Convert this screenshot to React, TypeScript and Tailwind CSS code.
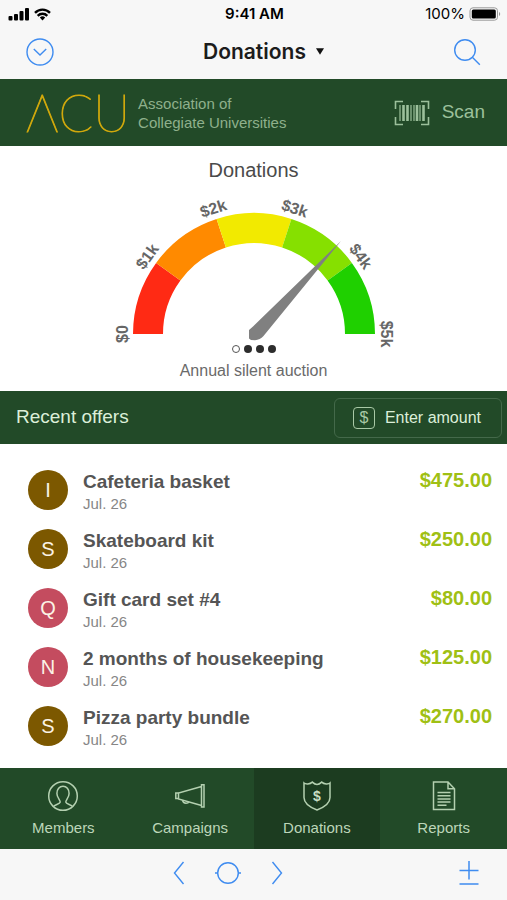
import React from 'react';

interface Offer {
  initial: string;
  title: string;
  date: string;
  amount: string;
  color: string;
}

const offers: Offer[] = [
  { initial: 'I', title: 'Cafeteria basket', date: 'Jul. 26', amount: '$475.00', color: 'bg-[#7c5800]' },
  { initial: 'S', title: 'Skateboard kit', date: 'Jul. 26', amount: '$250.00', color: 'bg-[#7c5800]' },
  { initial: 'Q', title: 'Gift card set #4', date: 'Jul. 26', amount: '$80.00', color: 'bg-[#c44c5f]' },
  { initial: 'N', title: '2 months of housekeeping', date: 'Jul. 26', amount: '$125.00', color: 'bg-[#c44c5f]' },
  { initial: 'S', title: 'Pizza party bundle', date: 'Jul. 26', amount: '$270.00', color: 'bg-[#7c5800]' },
];

const segments = ['#ff2a14', '#ff8a00', '#f2ea00', '#86e000', '#1fd000'];
const ticks = ['$0', '$1k', '$2k', '$3k', '$4k', '$5k'];

const CENTER_X = 150;
const CENTER_Y = 140;

// Point on a circle around the gauge's centre, 0deg is the left end
const polar = (radius: number, deg: number) => {
  const rad = ((180 - deg) * Math.PI) / 180;
  return {
    x: CENTER_X + radius * Math.cos(rad),
    y: CENTER_Y - radius * Math.sin(rad),
  };
};

const segmentPath = (from: number, to: number) => {
  const a = polar(121, from);
  const b = polar(121, to);
  const c = polar(91, to);
  const d = polar(91, from);
  return `M${a.x} ${a.y}A121 121 0 0 1 ${b.x} ${b.y}L${c.x} ${c.y}A91 91 0 0 0 ${d.x} ${d.y}Z`;
};

const Gauge: React.FC = () => (
  <svg
    viewBox="0 0 300 150"
    className="w-[300px] h-[150px] overflow-visible"
    role="img"
    aria-label="Donations gauge"
  >
    {segments.map((fill, i) => (
      <path key={fill} d={segmentPath(i * 36, (i + 1) * 36)} fill={fill} />
    ))}
    {ticks.map((label, i) => {
      const p = polar(132, i * 36);
      return (
        <text
          key={label}
          transform={`translate(${p.x} ${p.y}) rotate(${i * 36 - 90})`}
          textAnchor="middle"
          dominantBaseline="central"
          className="text-base font-bold fill-[#666666]"
        >
          {label}
        </text>
      );
    })}
    <path d="M237 47L159.500 142Q156 146 151 146.200L147 146L145 144.500L145 136L149 132.500Z" fill="#808080" />
  </svg>
);

const StatusBar: React.FC = () => (
  <div className="grid grid-cols-3 items-center h-7 pl-2 pr-1.5 font-['Inter',sans-serif] text-[15px] text-black">
    <div className="flex items-center gap-1">
      <svg viewBox="0 0 22 14" className="w-[22px] h-3.5" fill="#000">
        <rect x="0.500" y="9" width="4" height="4.500" rx="1" />
        <rect x="6" y="7" width="4" height="6.500" rx="1" />
        <rect x="11.500" y="4" width="4" height="9.500" rx="1" />
        <rect x="17" y="1" width="4" height="12.500" rx="1" />
      </svg>
      <svg viewBox="0 0 17 13" className="w-[17px] h-[13px]" fill="none" stroke="#000" strokeWidth="2.400">
        <path d="M1 4.800a10.500 10.500 0 0 1 15 0" />
        <path d="M3.700 7.800a6.700 6.700 0 0 1 9.600 0" />
        <path d="M8.500 12.400l-2.700-2.800a3.900 3.900 0 0 1 5.400 0z" fill="#000" stroke="none" />
      </svg>
    </div>
    <span className="text-center font-semibold">9:41 AM</span>
    <div className="flex items-center justify-end gap-1">
      <span>100%</span>
      <svg viewBox="0 0 32 14" className="w-8 h-3.5" fill="none">
        <rect x="1" y="0.800" width="27.500" height="12.400" rx="3" stroke="#999" strokeWidth="1" />
        <rect x="2.800" y="2.500" width="24" height="9" rx="1.500" fill="#000" />
        <path d="M30 5v4c1.600-.6 1.600-3.400 0-4z" fill="#999" />
      </svg>
    </div>
  </div>
);

const NavBar: React.FC = () => (
  <div className="flex items-center justify-between h-[51px] px-6 pb-1">
    <button type="button" aria-label="Close" className="p-0.5">
      <svg viewBox="0 0 28 28" className="w-7 h-7" fill="none" stroke="#3f8cf0" strokeWidth="1.400">
        <circle cx="14" cy="14" r="13" />
        <path d="M7.800 11l6.200 6 6.200-6" />
      </svg>
    </button>
    <button
      type="button"
      className="flex items-center gap-2.5 pl-5 font-['Inter',sans-serif] text-[21px] font-semibold text-[#1c1c1c]"
    >
      Donations
      <svg viewBox="0 0 8 7" className="w-2 h-[7px]" fill="#111">
        <path d="M0 .3h8L4 6.800z" />
      </svg>
    </button>
    <button type="button" aria-label="Search" className="p-0.5">
      <svg viewBox="0 0 28 28" className="w-7 h-7" fill="none" stroke="#3f8cf0" strokeWidth="1.400">
        <circle cx="12" cy="12" r="10.300" />
        <path d="M19.300 19.300l7.500 7.400" />
      </svg>
    </button>
  </div>
);

const BrandHeader: React.FC = () => (
  <div className="flex items-center justify-between h-[67px] pl-[26px] pr-[22px] bg-[#224a28]">
    <div className="flex items-center gap-2">
      <span
        aria-label="ACU"
        className="font-['Lato','Inter',sans-serif] font-thin text-[51px] leading-[60px] text-[#d0a80c] [-webkit-text-stroke:1px_#d0a80c]"
      >
        ΛCU
      </span>
      <p className="text-[15px] leading-[19px] text-[#8fb08c]">
        Association of
        <br />
        Collegiate Universities
      </p>
    </div>
    <button type="button" className="flex items-center gap-3 text-[19px] text-[#9cc09b]">
      <svg viewBox="0 0 36 26" className="w-9 h-[26px]" fill="none" stroke="#9cc09b" strokeWidth="1.600">
        <path d="M1.500 9V1.500H9M27 1.500h7.500V9M34.500 17v7.500H27M9 24.500H1.500V17" />
        <path d="M6 5v16M17 5v16M20 5v16M26 5v16" strokeWidth="1.200" />
        <path d="M9.500 5v16M13.500 5v16M23 5v16M29.500 5v16" strokeWidth="2.600" />
      </svg>
      Scan
    </button>
  </div>
);

const OfferRow: React.FC<{ offer: Offer }> = ({ offer }) => (
  <li className="flex items-start">
    <span
      className={`flex items-center justify-center w-10 h-10 rounded-full text-xl text-[#fbf3e6] ${offer.color}`}
    >
      {offer.initial}
    </span>
    <div className="flex-1 ml-[15px]">
      <p className="text-[19px] leading-6 font-bold text-[#555555]">{offer.title}</p>
      <p className="text-[15px] leading-5 text-[#868686]">{offer.date}</p>
    </div>
    <span className="text-xl leading-5 font-bold text-[#9fc014]">{offer.amount}</span>
  </li>
);

const tabs = [
  {
    name: 'Members',
    icon: (
      <>
        <circle cx="16" cy="16" r="14.300" />
        <path d="M6.500 26.500c1-1.900 6.300-2.300 6.700-4.300.3-1.700-3.300-4.500-3.300-8.800 0-4 2.500-7.200 6.100-7.200s6.100 3.200 6.100 7.200c0 4.300-3.600 7.100-3.300 8.800.4 2 5.700 2.400 6.700 4.300" />
      </>
    ),
  },
  {
    name: 'Campaigns',
    icon: (
      <>
        <path d="M27.500 4.700H30V27h-2.500zM27.500 6.500L4.500 13v6l23 6.500M4.500 13H1.800v5.500h2.700" />
        <path d="M8.500 20.200c.3 2 1.600 3 3.500 3 1.500 0 2.500-.4 3-1.500" />
      </>
    ),
  },
  {
    name: 'Donations',
    active: true,
    icon: (
      <>
        <path d="M3 3c1.500 1.400 6 1.300 8.300-.9 1.500 1.400 2.700 2.300 4.700 2.300s3.200-.9 4.700-2.300C23 4.300 27.500 4.400 29 3v14.500c0 6.500-6 9.800-13 12.500C9 27.300 3 24 3 17.500z" />
        <text x="16" y="21" textAnchor="middle" className="text-sm font-bold" fill="#c9dfc4" stroke="none">
          $
        </text>
      </>
    ),
  },
  {
    name: 'Reports',
    icon: (
      <>
        <path d="M5.500 2h14.500l6.500 6.800V29.500h-21zM20 2v6.800h6.500" />
        <path d="M9.500 12.500h13M9.500 15.700h13M9.500 18.900h13M9.500 22.100h13M9.500 25.300h9" />
      </>
    ),
  },
];

const TabBar: React.FC = () => (
  <nav className="grid grid-cols-4 h-[81px] bg-[#224a28]">
    {tabs.map((tab) => (
      <a
        key={tab.name}
        href="#"
        aria-current={tab.active ? 'page' : undefined}
        className={`flex flex-col items-center pt-3 gap-1 text-[15px] leading-6 text-[#bdd6b9] ${
          tab.active ? 'bg-[#1c3c20]' : ''
        }`}
      >
        <svg viewBox="0 0 32 32" className="w-8 h-8" fill="none" stroke="#b4d0b0" strokeWidth="1.500">
          {tab.icon}
        </svg>
        {tab.name}
      </a>
    ))}
  </nav>
);

const Toolbar: React.FC = () => (
  <div className="flex items-center justify-between h-[51px] px-6 pb-1">
    <span className="w-7" />
    <div className="flex items-center gap-[30px] pr-[52px]">
      <button type="button" aria-label="Back">
        <svg viewBox="0 0 12 24" className="w-3 h-6" fill="none" stroke="#3f8cf0" strokeWidth="1.400">
          <path d="M10.500 1L1.500 12l9 11" />
        </svg>
      </button>
      <button type="button" aria-label="Home">
        <svg viewBox="0 0 26 24" className="w-[26px] h-6" fill="none" stroke="#3f8cf0" strokeWidth="1.400">
          <circle cx="13" cy="12" r="10.300" />
          <path d="M0 12h3M23 12h3" />
        </svg>
      </button>
      <button type="button" aria-label="Forward">
        <svg viewBox="0 0 12 24" className="w-3 h-6" fill="none" stroke="#3f8cf0" strokeWidth="1.400">
          <path d="M1.500 1l9 11-9 11" />
        </svg>
      </button>
    </div>
    <button type="button" aria-label="Add or remove" className="p-1">
      <svg viewBox="0 0 20 26" className="w-5 h-[26px]" fill="none" stroke="#3f8cf0" strokeWidth="1.500">
        <path d="M10 1v18.500M.5 10.500h19M.5 24h19" />
      </svg>
    </button>
  </div>
);

const App: React.FC = () => {
  return (
    <div className="flex flex-col min-h-screen bg-white font-['Liberation_Sans',Arial,sans-serif]">
      <header className="bg-[#f7f7f7]">
        <StatusBar />
        <NavBar />
      </header>

      <main className="flex flex-col flex-1">
        <BrandHeader />

        {/* Donations gauge */}
        <section className="flex flex-col items-center pt-3 pb-2">
          <h1 className="text-xl leading-6 text-[#4a4a4a]">Donations</h1>
          <div className="pt-3">
            <Gauge />
          </div>
          <div className="flex items-center gap-1 pt-px">
            <span className="w-2 h-2 rounded-full border border-[#555555]" />
            <span className="w-2 h-2 rounded-full bg-[#2d2d2d]" />
            <span className="w-2 h-2 rounded-full bg-[#2d2d2d]" />
            <span className="w-2 h-2 rounded-full bg-[#2d2d2d]" />
          </div>
          <p className="mt-1.5 text-base text-[#6a6a6a]">Annual silent auction</p>
        </section>

        <div className="flex items-center justify-between h-[53px] pl-4 pr-[5px] bg-[#224a28]">
          <h2 className="text-[19px] text-[#dcefd9]">Recent offers</h2>
          <button
            type="button"
            className="flex items-center gap-2.5 h-10 pl-[18px] pr-5 rounded-md border border-[#44694a] text-base text-[#dcefd9]"
          >
            <span className="flex items-center justify-center w-[22px] h-[22px] rounded-sm border border-[#a9c9a6] text-[#a9c9a6]">
              $
            </span>
            Enter amount
          </button>
        </div>

        {/* Recent offers */}
        <ul className="flex flex-col flex-1 gap-[15px] pt-[26px] pl-7 pr-[15px]">
          {offers.map((offer) => (
            <OfferRow key={offer.title} offer={offer} />
          ))}
        </ul>

        <TabBar />
      </main>

      <footer className="bg-[#f7f7f7]">
        <Toolbar />
      </footer>
    </div>
  );
};

export default App;
